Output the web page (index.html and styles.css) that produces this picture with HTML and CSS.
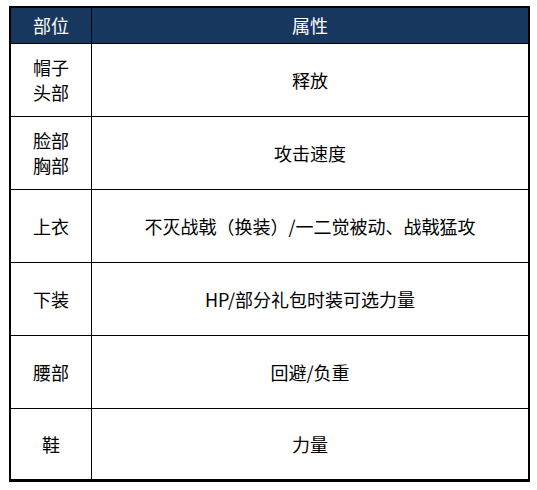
FILE: index.html
```html
<!DOCTYPE html>
<html>
<head>
<meta charset="utf-8">
<link rel="stylesheet" href="styles.css">
</head>
<body>
<table class="tbl">
  <thead>
    <tr><th class="c1">部位</th><th class="c2">属性</th></tr>
  </thead>
  <tbody>
    <tr><td class="c1">帽子<br>头部</td><td class="c2">释放</td></tr>
    <tr><td class="c1">脸部<br>胸部</td><td class="c2">攻击速度</td></tr>
    <tr><td class="c1">上衣</td><td class="c2">不灭战戟（换装）/一二觉被动、战戟猛攻</td></tr>
    <tr><td class="c1">下装</td><td class="c2">HP/部分礼包时装可选力量</td></tr>
    <tr><td class="c1">腰部</td><td class="c2">回避/负重</td></tr>
    <tr class="last"><td class="c1">鞋</td><td class="c2">力量</td></tr>
  </tbody>
</table>
</body>
</html>
```
FILE: styles.css
```css
html, body {
  margin: 0;
  padding: 0;
  background: #ffffff;
}
body {
  padding: 6px 0 0 9px;
  font-family: "Noto Sans CJK SC", "Noto Sans", sans-serif;
  font-size: 18px;
  color: #000;
}
.tbl {
  border-collapse: collapse;
  width: 521px;
  border-top: 2px solid #000;
  border-left: 2px solid #000;
  border-right: 2px solid #000;
  border-bottom: 3px solid #000;
}
.tbl th, .tbl td {
  border: 1px solid #000;
  text-align: center;
  vertical-align: middle;
  padding: 0;
  line-height: 25px;
}
.tbl th {
  background: #17375e;
  color: #fff;
  font-weight: normal;
  height: 35px;
}
.tbl td {
  height: 72px;
}
.tbl .last td {
  height: 70px;
}
.c1 {
  width: 80px;
}
```
